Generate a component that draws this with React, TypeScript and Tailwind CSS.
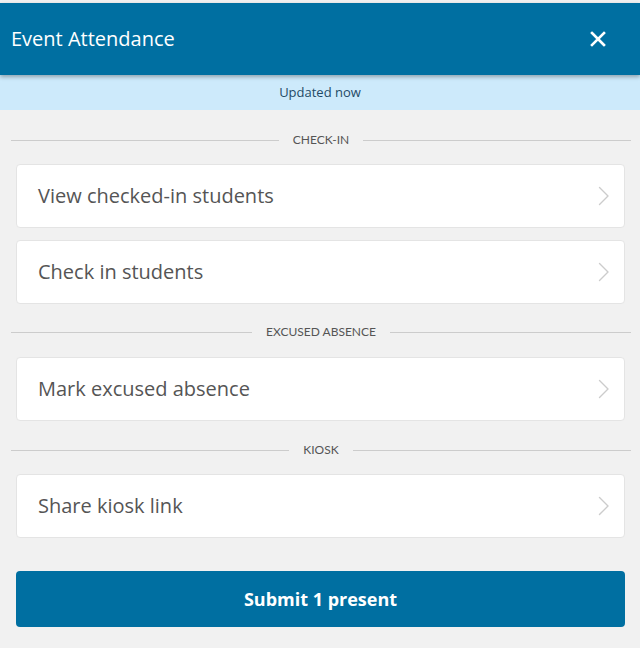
import React from "react";

const Chevron = () => (
  <svg width="12" height="20" viewBox="0 0 12 20" fill="none" className="shrink-0">
    <path d="M1.5 1.5 L10 10 L1.5 18.5" stroke="#cccccc" strokeWidth="1.4" strokeLinecap="round" strokeLinejoin="round" />
  </svg>
);

const Divider = ({ label }: { label: string }) => (
  <div className="flex items-center gap-[14px] pl-[11px] pr-[9px]">
    <div className="h-px flex-1 bg-[#cccccc]" />
    <span className="text-[12px] leading-none text-[#555555] uppercase" style={{ fontFamily: "'Lato', sans-serif" }}>{label}</span>
    <div className="h-px flex-1 bg-[#cccccc]" />
  </div>
);

const Item = ({ label }: { label: string }) => (
  <div className="ml-[16px] mr-[15px] flex h-[64px] items-center justify-between rounded-[4px] border border-[#e4e4e4] bg-white pl-[21px] pr-[14px]">
    <span className="text-[20px] text-[#555555]">{label}</span>
    <Chevron />
  </div>
);

export default function App() {
  return (
    <div
      className="flex min-h-[648px] w-[640px] flex-col bg-[#f1f1f1] pt-[3px]"
      style={{ fontFamily: "'Open Sans', 'Noto Sans', sans-serif" }}
    >
      <div className="relative z-10 flex h-[72px] items-center justify-between bg-[#006fa1] pl-[11px] pr-[34px] shadow-[0_2px_4px_rgba(0,0,0,0.3)]">
        <span className="text-[20px] text-white">Event Attendance</span>
        <svg width="16" height="16" viewBox="0 0 16 16">
          <path d="M2 2 L14 14 M14 2 L2 14" stroke="white" strokeWidth="2.6" strokeLinecap="square" />
        </svg>
      </div>
      <div className="flex h-[35px] items-center justify-center bg-[#cdeafb] text-[13px] text-[#1f4a66]">
        Updated now
      </div>
      <div className="flex flex-col pt-[24px]">
        <Divider label="Check-in" />
        <div className="mt-[18px] flex flex-col gap-[12px]">
          <Item label="View checked-in students" />
          <Item label="Check in students" />
        </div>
        <div className="mt-[22px]">
          <Divider label="Excused absence" />
        </div>
        <div className="mt-[19px]">
          <Item label="Mark excused absence" />
        </div>
        <div className="mt-[23px]">
          <Divider label="Kiosk" />
        </div>
        <div className="mt-[18px]">
          <Item label="Share kiosk link" />
        </div>
        <button
          className="ml-[16px] mr-[15px] mt-[33px] flex h-[56px] items-center justify-center rounded-[4px] bg-[#006fa1] text-[18px] font-bold text-white"
        >
          Submit 1 present
        </button>
      </div>
    </div>
  );
}
